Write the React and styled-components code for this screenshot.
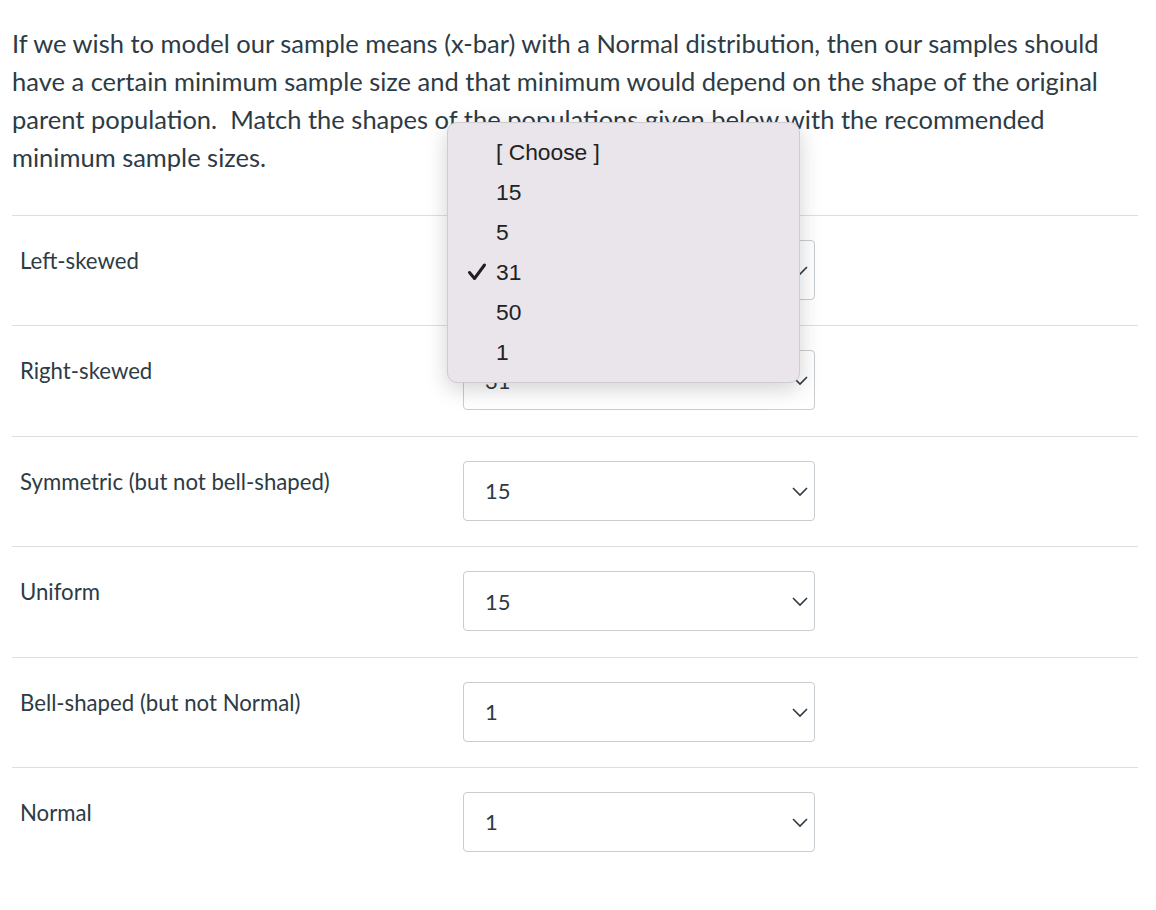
import React from "react";
import styled, { createGlobalStyle } from "styled-components";

const Global = createGlobalStyle`
  body {
    margin: 0;
    background: #fff;
    font-family: Lato, "Noto Sans", sans-serif;
    color: #2d3b45;
  }
`;

const Page = styled.div`
  position: relative;
  width: 1126px;
  padding: 24px 0 0 12px;
`;

const Prompt = styled.p`
  margin: 0 0 39px;
  font-size: 25.5px;
  line-height: 38px;
  white-space: nowrap;
`;

const Row = styled.div`
  display: grid;
  grid-template-columns: 451px 352px 1fr;
  height: 110.4px;
  box-sizing: border-box;
  border-top: 1px solid #dcdfe1;
`;

const Label = styled.div`
  padding: 30px 0 0 8px;
  font-size: 22.2px;
  line-height: 30px;
`;

const Select = styled.div`
  margin-top: 24px;
  height: 60px;
  box-sizing: border-box;
  border: 1px solid #c7cdd1;
  border-radius: 4px;
  display: flex;
  align-items: center;
  justify-content: space-between;
  padding: 0 5px 0 21px;
  font-size: 22px;
`;

const Menu = styled.ul`
  position: absolute;
  left: 447px;
  top: 122px;
  width: 353px;
  height: 261px;
  box-sizing: border-box;
  margin: 0;
  padding: 9px 0 0;
  list-style: none;
  background: #e9e5ea;
  border: 1px solid #cfcbd0;
  border-radius: 10px;
  box-shadow: 0 6px 22px rgba(0, 0, 0, 0.18);
  font-family: "Liberation Sans", Arial, sans-serif;
  color: #222;
  font-size: 22.8px;
`;

const Item = styled.li`
  display: flex;
  align-items: center;
  height: 40px;
  padding-left: 19px;
`;

const CheckSlot = styled.span`
  width: 29px;
  display: flex;
  align-items: center;
`;

const Check = () => (
  <svg width="20" height="20" viewBox="0 0 20 20">
    <path d="M2.5 10.5 L7.5 16.5 L17.5 3" fill="none" stroke="#1e1e1e" strokeWidth="3" strokeLinecap="round" strokeLinejoin="round" />
  </svg>
);

const Chevron = () => (
  <svg width="18" height="18" viewBox="0 0 18 18">
    <path d="M2 6 L9 13 L16 6" fill="none" stroke="#2d3b45" strokeWidth="1.6" />
  </svg>
);

const rows = [
  ["Left-skewed", "31"],
  ["Right-skewed", "31"],
  ["Symmetric (but not bell-shaped)", "15"],
  ["Uniform", "15"],
  ["Bell-shaped (but not Normal)", "1"],
  ["Normal", "1"],
];

const options = ["[ Choose ]", "15", "5", "31", "50", "1"];

export default function App() {
  return (
    <Page>
      <Global />
      <Prompt>
        If we wish to model our sample means (x-bar) with a Normal distribution, then our samples should
        <br />
        have a certain minimum sample size and that minimum would depend on the shape of the original
        <br />
        parent population.&nbsp; Match the shapes of the populations given below with the recommended
        <br />
        minimum sample sizes.
      </Prompt>
      {rows.map(([label, value]) => (
        <Row key={label}>
          <Label>{label}</Label>
          <Select>
            <span>{value}</span>
            <Chevron />
          </Select>
        </Row>
      ))}
      <Menu>
        {options.map((o) => (
          <Item key={o}>
            <CheckSlot>{o === "31" && <Check />}</CheckSlot>
            {o}
          </Item>
        ))}
      </Menu>
    </Page>
  );
}
